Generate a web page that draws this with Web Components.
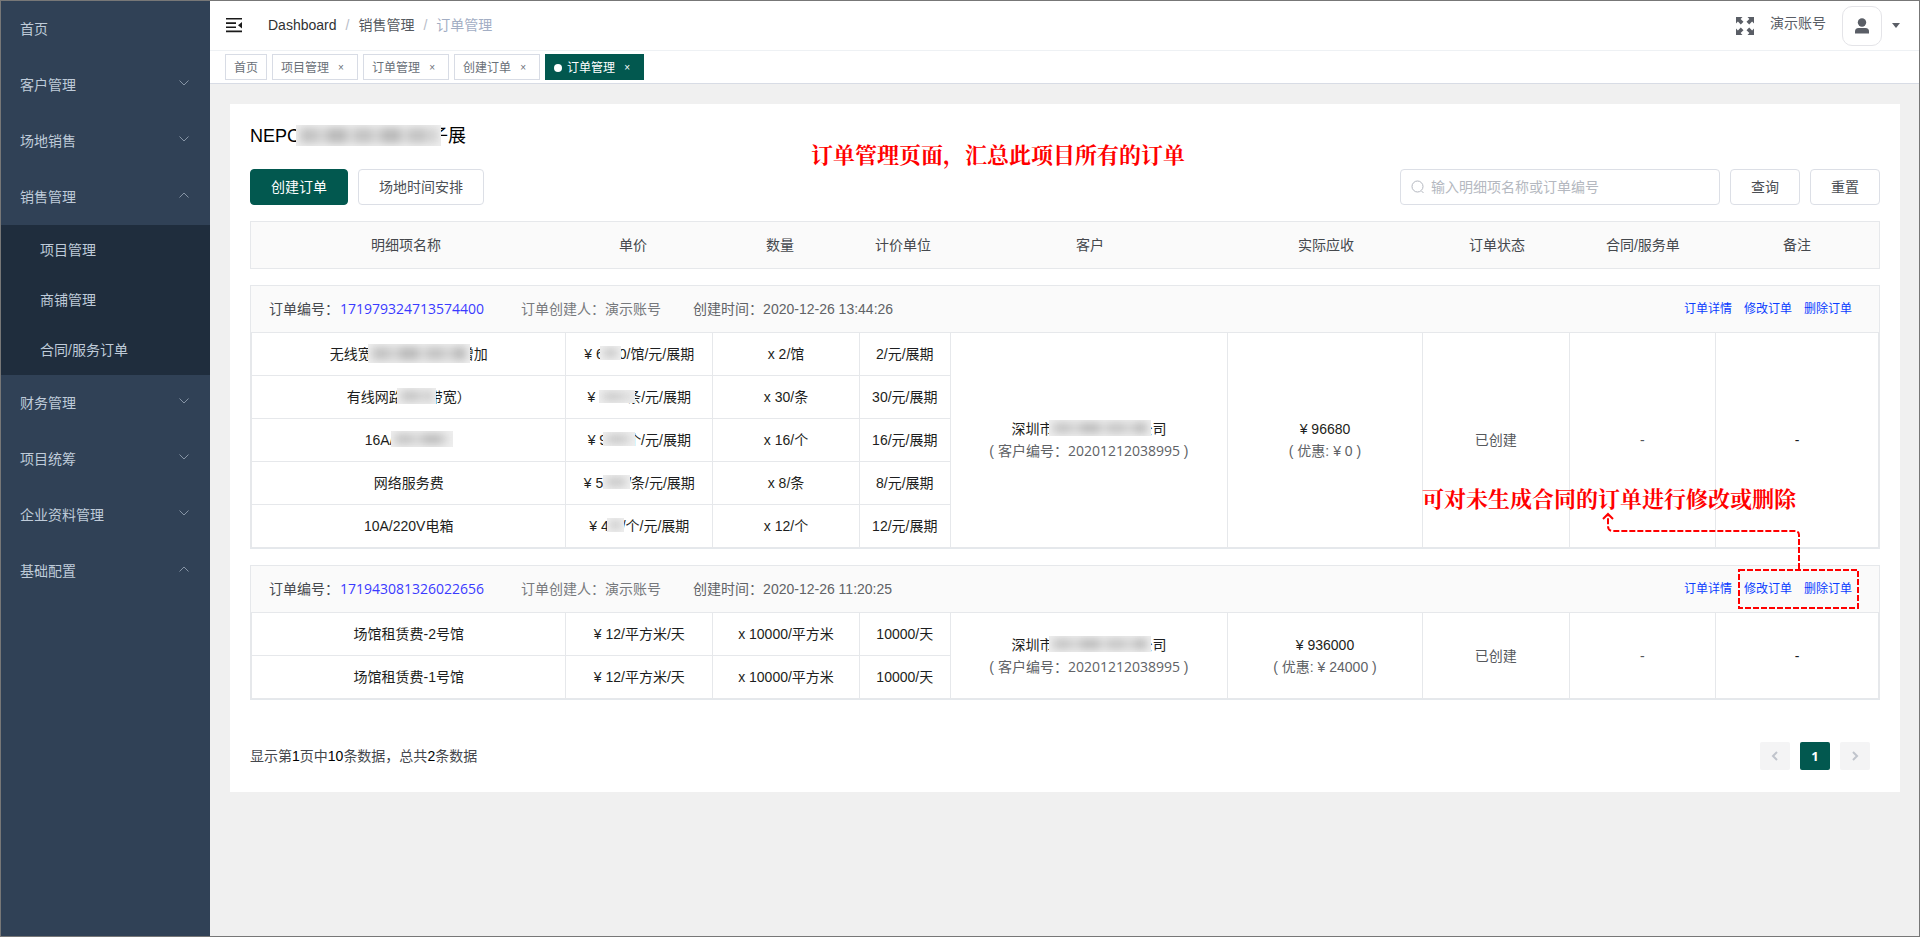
<!DOCTYPE html>
<html lang="zh-CN">
<head>
<meta charset="utf-8">
<title>订单管理</title>
<style>
html,body{height:100%}
body{margin:0;font:14px/20px "Liberation Sans","Noto Sans CJK SC",sans-serif;color:#000;background:#f0f0f0}
</style>
</head>
<body>
<app-shell>
  <side-bar slot="side">
    <menu-item label="首页"></menu-item>
    <menu-item label="客户管理" arrow="down"></menu-item>
    <menu-item label="场地销售" arrow="down"></menu-item>
    <menu-item label="销售管理" arrow="up">
      <menu-item level="sub" label="项目管理"></menu-item>
      <menu-item level="sub" label="商铺管理"></menu-item>
      <menu-item level="sub" label="合同/服务订单"></menu-item>
    </menu-item>
    <menu-item label="财务管理" arrow="down"></menu-item>
    <menu-item label="项目统筹" arrow="down"></menu-item>
    <menu-item label="企业资料管理" arrow="down"></menu-item>
    <menu-item label="基础配置" arrow="up"></menu-item>
  </side-bar>
  <top-bar slot="top"></top-bar>
  <tab-strip slot="top">
    <tab-tag>首页</tab-tag>
    <tab-tag closable>项目管理</tab-tag>
    <tab-tag closable>订单管理</tab-tag>
    <tab-tag closable>创建订单</tab-tag>
    <tab-tag closable active>订单管理</tab-tag>
  </tab-strip>
  <order-page></order-page>
</app-shell>
<script>
const define = (name, html, setup) => {
  const template = document.createElement('template');
  template.innerHTML = html;
  customElements.define(name, class extends HTMLElement {
    connectedCallback() {
      if (this.shadowRoot) return;
      const root = this.attachShadow({mode: 'open'});
      root.append(template.content.cloneNode(true));
      if (setup) setup(this, root);
    }
  });
};

define('app-shell', `
<style>
:host{display:flex;min-height:100vh;box-sizing:border-box;border:1px solid #777}
aside{flex:0 0 209px;background:#304156}
.body{flex:1;min-width:0;display:flex;flex-direction:column}
main{padding:20px 19px 20px 20px}
</style>
<aside><slot name="side"></slot></aside>
<div class="body"><header><slot name="top"></slot></header><main><slot></slot></main></div>`);

define('side-bar', `
<style>:host{display:block}</style><nav><slot></slot></nav>`);

define('menu-item', `
<style>
:host{display:block}
a{display:flex;align-items:center;justify-content:space-between;height:56px;padding:0 20px 0 19px;color:#bfcbd9;text-decoration:none}
:host([level=sub]) a{height:50px;padding-left:39px;background:#1f2d3d}
svg{width:12px;height:12px;margin-bottom:4px;fill:none;stroke:#8694a5}
:host([arrow=up]) svg{transform:rotate(180deg)}
:host(:not([arrow])) svg{display:none}
</style>
<a href="#"><span></span><svg viewBox="0 0 12 12"><path d="M1.5 3.5 6 8l4.500-4.500"/></svg></a><slot></slot>`,
(el, root) => { root.querySelector('span').textContent = el.getAttribute('label'); });

define('top-bar', `
<style>
:host{display:flex;align-items:center;height:49px;padding:0 19px 0 15px;background:#fff;border-bottom:1px solid #eef1f4}
.fold{width:20px;height:20px}
nav{display:flex;margin-left:23px;flex:1;padding-bottom:2px}
nav a{color:#303133;text-decoration:none}
nav a.mid{color:#55595f}
nav i{margin:0 9px;color:#b8bdc8;font-style:normal}
nav span{color:#a3aec4}
.full{width:20px;height:20px;margin-right:15px}
.name{color:#5a5e66;margin:0 16px 6px 0}
button{display:flex;align-items:center;gap:10px;padding:0;border:0;background:none}
.avatar{display:flex;align-items:center;justify-content:center;width:38px;height:38px;border:1px solid #e4e4e8;border-radius:10px}
</style>
<svg class="fold" viewBox="0 0 20 20" fill="#1a1a1a"><path d="M1 2h16v1.600H1zM1 6.300h10v1.600H1zM1 10.500h10v1.600H1zM1 14.600h16v1.600H1zM17 6v6.400l-4-3.200z"/></svg>
<nav><a href="#">Dashboard</a><i>/</i><a class="mid" href="#">销售管理</a><i>/</i><span>订单管理</span></nav>
<svg class="full" viewBox="0 0 20 20" fill="#5a5e66"><path d="M1 1h6.500L5.600 2.900l2.900 2.900-2.700 2.700-2.900-2.900L1 7.500zM19 1h-6.500l1.900 1.900-2.900 2.900 2.700 2.700 2.900-2.900L19 7.500zM1 19h6.500l-1.900-1.900 2.900-2.900-2.700-2.700-2.900 2.900L1 12.500zM19 19h-6.500l1.900-1.900-2.900-2.900 2.700-2.700 2.900 2.900 1.900-1.900z"/></svg>
<span class="name">演示账号</span>
<button aria-label="账号菜单"><span class="avatar"><svg width="16" height="16" viewBox="0 0 16 16" fill="#5a5e66"><circle cx="8" cy="4.500" r="4.200"/><path d="M1 15.500v-2Q1 10 4.500 10h7Q15 10 15 13.500v2z"/></svg></span><svg width="8" height="5" viewBox="0 0 8 5" fill="#5a5e66"><path d="M0 0h8L4 5z"/></svg></button>`);

define('tab-strip', `
<style>:host{display:flex;gap:5px;height:32px;align-items:center;padding:0 15px;background:#fff;border-bottom:1px solid #d8dce5}</style><slot></slot>`);

define('tab-tag', `
<style>
:host{display:flex;align-items:center;height:22px;padding:2px 8px 0;border:1px solid #d8dce5;background:#fff;color:#6a7078;font-size:12px}
button{display:none;width:16px;height:16px;margin-left:4px;padding:0;border:0;background:none;color:inherit;font:10px/16px "Liberation Sans",sans-serif}
:host([closable]) button{display:block}
:host([active]){background:#02584f;border-color:#02584f;color:#fff}
:host([active])::before{content:"";width:8px;height:8px;border-radius:50%;background:#fff;margin-right:5px}
</style><slot></slot><button aria-label="关闭">×</button>`);

define('ui-button', `
<style>
:host{display:block}
button{height:36px;padding:0 20px;border:1px solid #dcdfe6;border-radius:4px;background:#fff;color:#4c4f55;font:inherit;white-space:nowrap}
:host([primary]) button{background:#02584f;border-color:#02584f;color:#fff}
</style><button><slot></slot></button>`);

define('search-box', `
<style>
:host{display:flex;align-items:center;gap:6px;width:320px;height:36px;box-sizing:border-box;padding:0 10px;border:1px solid #dcdfe6;border-radius:4px}
svg{flex:none}
input{flex:1;min-width:0;border:0;outline:0;padding:0;font:inherit;background:none}
input::placeholder{color:#b4b8c0;opacity:1}
</style>
<svg width="14" height="14" viewBox="0 0 14 14" fill="none" stroke="#b4b8c0"><circle cx="6.500" cy="6.500" r="5.500"/><path d="m10.500 11 2 2"/></svg>
<input type="text" aria-label="搜索" placeholder="输入明细项名称或订单编号">`);

define('blur-mask', `
<style>
:host{display:inline-block;position:relative;vertical-align:middle;overflow:hidden;background:#efefef}
i{position:absolute;inset:3px 4px;filter:blur(4px);background:repeating-linear-gradient(90deg,#c2c2c2 0 16px,#d6d6d6 20px 24px,#b8b8b8 30px 45px,#dcdcdc 49px 54px)}
</style><i></i>`,
(el) => {
  const [w, h, l, r] = el.getAttribute('box').split(' ');
  el.style.cssText = `width:${w}px;height:${h}px;margin:-4px ${-r}px 0 ${-l}px`;
});

const m = (w, h, l, r) => `<blur-mask box="${w} ${h} ${l} ${r}"></blur-mask>`;
const cols = (...parts) => {
  const total = parts.reduce((a, b) => a + b);
  return '<colgroup>' + parts.map(w => `<col style="width:${(w / total * 100).toFixed(3)}%">`).join('') + '</colgroup>';
};

define('order-head', `
<style>
:host{display:block}
table{width:100%;height:48px;table-layout:fixed;border-collapse:collapse;background:#fafafa;outline:1px solid #e6e8eb;outline-offset:-1px}
th{padding:0;font-weight:400;color:#45484d}
</style>
<table>${cols(312,142,152,94,280,192,150,142,166)}<thead><tr>${['明细项名称','单价','数量','计价单位','客户','实际应收','订单状态','合同/服务单','备注'].map(t => `<th>${t}</th>`).join('')}</tr></thead></table>`);

const ORDERS = {
  a: {id: '171979324713574400', time: '2020-12-26 13:44:26', price: '96680', off: '0', rows: [
    ['无线宽' + m(102,19,4,10) + '增加', '¥ 6' + m(21,14,4,2) + '0/馆/元/展期', 'x 2/馆', '2/元/展期'],
    ['有线网路' + m(39,16,6,7) + '带宽）', '¥ ' + m(36,13,0,8) + '条/元/展期', 'x 30/条', '30/元/展期'],
    ['16A/' + m(62,16,3,0), '¥ 9' + m(32,14,4,8) + '个/元/展期', 'x 16/个', '16/元/展期'],
    ['网络服务费', '¥ 5' + m(27,14,0,3) + '/条/元/展期', 'x 8/条', '8/元/展期'],
    ['10A/220V电箱', '¥ 4' + m(17,14,2,2) + '/个/元/展期', 'x 12/个', '12/元/展期']]},
  b: {id: '171943081326022656', time: '2020-12-26 11:20:25', price: '936000', off: '24000', rows: [
    ['场馆租赁费-2号馆', '¥ 12/平方米/天', 'x 10000/平方米', '10000/天'],
    ['场馆租赁费-1号馆', '¥ 12/平方米/天', 'x 10000/平方米', '10000/天']]}
};

define('order-card', `
<style>
:host{display:block;position:relative;border:1px solid #e6e8eb;border-bottom-color:#e4e8ec}
header{display:flex;align-items:center;height:46px;padding:0 27px 0 18px;background:#fafafa;color:#77797d}
header .id{color:#45484d;margin-right:37px}
header .who{margin-right:32px}
header time{flex:1;color:#606266}
.num{font-family:"Open Sans","Noto Sans CJK SC",sans-serif}
.id .num{color:#3a3aff;margin-left:1px}
header a{margin-left:12px;font-size:12px;color:#0a3cff;text-decoration:none}
table{width:100%;table-layout:fixed;border-collapse:collapse}
td{height:42px;padding:0;border:1px solid #e6e8eb;text-align:center;color:#1d1e20;line-height:22px;white-space:nowrap}
small{font-size:14px;color:#606266;display:block}
.dim{color:#55585c}
</style>
<header><span class="id">订单编号：<span class="num"></span></span><span class="who">订单创建人：演示账号</span><time></time><a href="#">订单详情</a><a href="#">修改订单</a><a href="#">删除订单</a></header>
<table>${cols(315,147,147,91,278,195,147,147,163)}<tbody></tbody></table>
<slot></slot>`,
(el, root) => {
  const o = ORDERS[el.getAttribute('order')];
  root.querySelector('.num').textContent = o.id;
  root.querySelector('time').textContent = '创建时间：' + o.time;
  const n = o.rows.length;
  const rest = `<td rowspan="${n}">深圳市${m(102,16,4,13)}公司<small>( 客户编号：<span class="num">20201212038995</span> )</small></td>
<td rowspan="${n}">¥ ${o.price}<small>( 优惠: ¥ ${o.off} )</small></td><td class="dim" rowspan="${n}">已创建</td><td class="dim" rowspan="${n}">-</td><td rowspan="${n}">-</td>`;
  root.querySelector('tbody').innerHTML = o.rows.map((r, i) => '<tr>' + r.map(c => `<td>${c}</td>`).join('') + (i ? '' : rest) + '</tr>').join('');
});

define('red-note', `
<style>:host{position:absolute;color:#f00;font:bold 22px/30px "Noto Serif CJK SC","Liberation Serif","Noto Sans CJK SC",serif;white-space:nowrap}</style><slot></slot>`);

define('note-arrow', `
<style>:host{position:absolute;right:19px;top:-55px;width:262px;height:100px;pointer-events:none}svg{display:block}</style>
<svg width="262" height="100" viewBox="0 0 262 100" fill="none" stroke="#f00" stroke-width="2"><path d="M5 8 10 3l5 5"/><path stroke-dasharray="6 2" d="M201 58V24q0-4-4-4H15q-5 0-5-5V4M141 59h119v38H141z"/></svg>`);

define('page-nav', `
<style>
:host{display:flex;align-items:center;justify-content:space-between;padding-right:10px;color:#45484d}
b{font-weight:400;color:#000}
nav{display:flex;gap:10px}
button{display:flex;align-items:center;justify-content:center;width:30px;height:28px;padding:0;border:0;border-radius:2px;background:#f4f4f5;color:#fff;font:bold 13px/28px "Open Sans",sans-serif}
.on{background:#02584f}
</style>
<span>显示第<b>1</b>页中<b>10</b>条数据，总共<b>2</b>条数据</span>
<nav><button aria-label="上一页"><svg width="12" height="12" fill="none" stroke="#c0c4cc" stroke-width="2"><path d="M8 2 4 6l4 4"/></svg></button><button class="on">1</button><button aria-label="下一页"><svg width="12" height="12" fill="none" stroke="#c0c4cc" stroke-width="2"><path d="m4 2 4 4-4 4"/></svg></button></nav>`);

define('order-page', `
<style>
:host{display:block;position:relative;background:#fff;padding:20px 20px 22px}
h1{margin:0;font-size:18px;font-weight:400;line-height:24px}
.bar{display:flex;gap:10px;margin:21px 0 16px}
search-box{margin-left:auto}
order-card{margin-top:16px}
page-nav{margin-top:42px}
.top{left:581px;top:35px}
.mod{right:83px;top:-83px}
</style>
<h1>NEPC${m(145,21,4,11)}子展</h1>
<div class="bar"><ui-button primary>创建订单</ui-button><ui-button>场地时间安排</ui-button><search-box></search-box><ui-button>查询</ui-button><ui-button>重置</ui-button></div>
<order-head></order-head>
<order-card order="a"></order-card>
<order-card order="b"><red-note class="mod">可对未生成合同的订单进行修改或删除</red-note><note-arrow></note-arrow></order-card>
<page-nav></page-nav>
<red-note class="top">订单管理页面，汇总此项目所有的订单</red-note>`);
</script>
</body>
</html>
